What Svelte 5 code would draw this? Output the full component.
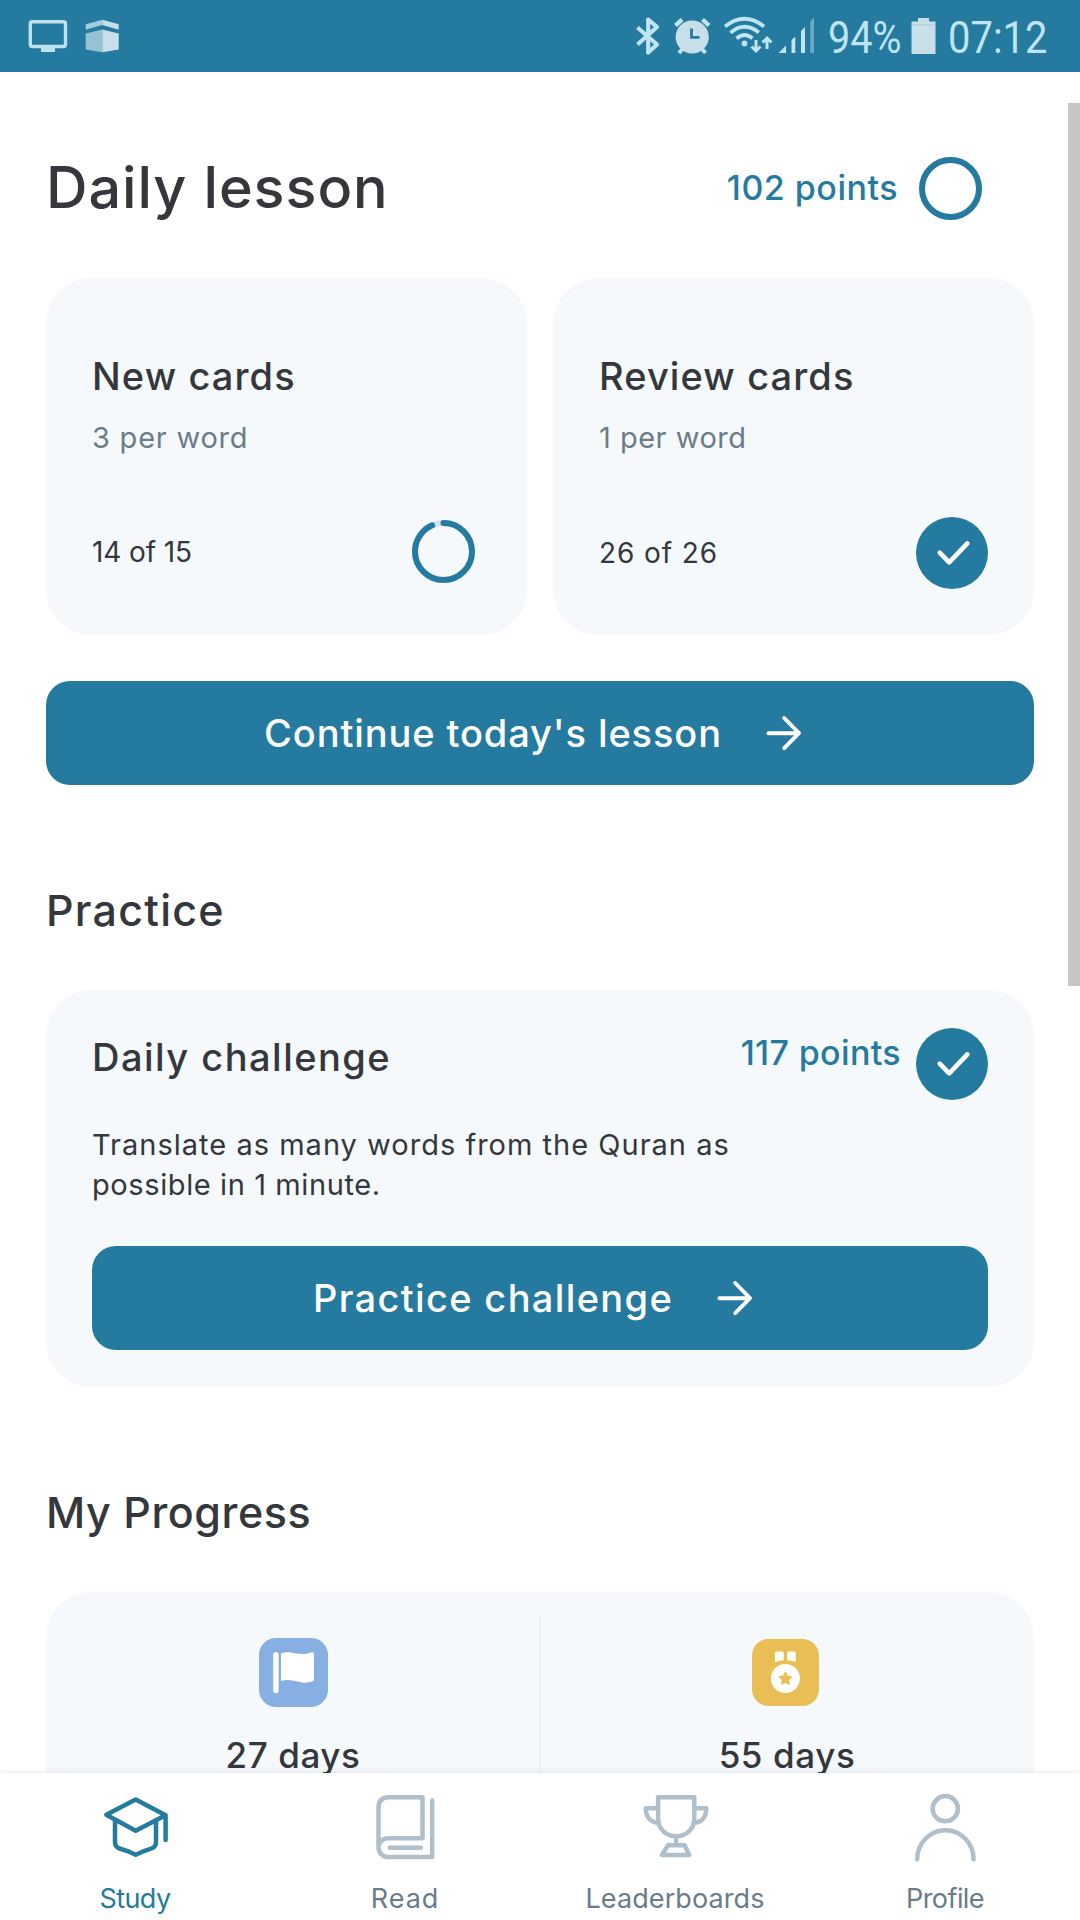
<script>
  const lessonCards = [
    { title: 'New cards', sub: '3 per word', count: '14 of 15', progress: 14 / 15, kind: 'new' },
    { title: 'Review cards', sub: '1 per word', count: '26 of 26', progress: 1, kind: 'review' }
  ];
  const circumference = 2 * Math.PI * 28.5;
  const tabs = ['Study', 'Read', 'Leaderboards', 'Profile'];
</script>

{#snippet ring(progress)}
  <svg class="ring" viewBox="0 0 63 63" fill="none" stroke-width="6">
    <circle cx="31.5" cy="31.5" r="28.5" stroke="#cfe3ef" />
    {#if progress >= 1}
      <circle cx="31.5" cy="31.5" r="28.5" stroke="#247a9f" />
    {:else}
      <circle
        cx="31.5" cy="31.5" r="28.5" stroke="#247a9f" stroke-linecap="round"
        stroke-dasharray="{circumference * progress} {circumference}"
        transform="rotate(-90 31.5 31.5)"
      />
    {/if}
  </svg>
{/snippet}

{#snippet check()}
  <svg class="check" viewBox="0 0 72 72" fill="none">
    <circle cx="36" cy="36" r="36" fill="#247a9f" />
    <path d="M23.7 35.7 33.2 45.3 51.3 26.4" stroke="#fff" stroke-width="4.6" stroke-linecap="round" stroke-linejoin="round" />
  </svg>
{/snippet}

{#snippet arrow()}
  <svg class="arrow" viewBox="0 0 65 44" fill="none" stroke="#fff" stroke-width="3.9" stroke-linecap="round" stroke-linejoin="round">
    <path d="M17.4 22.2H47.5M33.2 7 48 22.2 33.2 37.2" />
  </svg>
{/snippet}

<div class="screen">
  <div class="statusbar">
    <svg class="notif" viewBox="0 0 130 72">
      <rect x="30.3" y="21.7" width="35.2" height="24.8" rx="2" fill="none" stroke="#bfe1ee" stroke-width="3.4" />
      <path d="M41 47h14v5H41z" fill="#bfe1ee" />
      <path d="M85.7 24.2 102.3 19.7V25L85.7 29.8z" fill="#a3cbdb" />
      <path d="M102.3 19.7 118.7 24.2V29.8L102.3 25z" fill="#c6e0ea" />
      <path d="M85.7 33.6 102.3 29.4V52.2L85.7 49.4z" fill="#96c2d3" />
      <path d="M102.3 29.4 118.7 33.6V49.4L102.3 52.2z" fill="#c9dfe8" />
    </svg>
    <svg class="signals" viewBox="630 0 198 72" fill="none" stroke="#bfe4f2">
      <path d="M637.5 27.5 657 44.5 648.2 52.5V19.5L657 27 637.5 44.5" stroke-width="4.2" stroke-linejoin="round" />
      <g stroke-width="4.4">
        <path d="M675.5 25.5 682 19.5M709 25.5 702.5 19.5" />
        <path d="M679 53 682.5 49M705.5 53 702 49" stroke-width="4" />
      </g>
      <circle cx="692.2" cy="37" r="16.6" fill="#c6dfe8" stroke="none" />
      <path d="M691.5 28.5V37.3H699.5" stroke="#247a9f" stroke-width="2.8" />
      <g stroke-width="3.8">
        <path d="M725 26.5Q744.5 11 764 26.5" />
        <path d="M730.5 32.8Q744.5 21 758.8 32.5" />
        <path d="M736.5 38.5Q744.5 31.5 752.5 38.2" />
      </g>
      <circle cx="744.5" cy="43.5" r="2.9" fill="#bfe4f2" stroke="none" />
      <path d="M756 40V50.5M751.5 46.5 756 51 760.5 46.5M767 49V38.5M762.5 42.5 767 38 771.5 42.5" stroke-width="3" />
      <g stroke="none" fill="#bfe4f2">
        <path d="M778.5 53 786 45.5V53z" />
        <path d="M791.5 40 795.3 36.5V53H791.5z" />
        <path d="M801 31 805 27V53H801z" />
        <path d="M810.3 21 814 17.5V53H810.3z" opacity=".45" />
      </g>
    </svg>
    <span class="pct"><span>94%</span></span>
    <svg class="battery" viewBox="0 0 25 72">
      <path d="M7 18H18V21.5H24.5V54H.5V21.5H7z" fill="#c6dfe8" />
      <path d="M.5 24.8H24.5" stroke="#a5cfdf" stroke-width="1" />
    </svg>
    <span class="clock"><span>07:12</span></span>
  </div>

  <main class="content">
    <header class="head">
      <h1>Daily lesson</h1>
      <span class="points lesson-points">102 points</span>
      {@render ring(1)}
    </header>

    <section class="cards">
      {#each lessonCards as card}
        <article class="card {card.kind}">
          <h3>{card.title}</h3>
          <p class="sub">{card.sub}</p>
          <div class="count-row">
            <span class="count">{card.count}</span>
            {#if card.progress < 1}{@render ring(card.progress)}{:else}{@render check()}{/if}
          </div>
        </article>
      {/each}
    </section>

    <button class="cta continue"><span>Continue today's lesson</span>{@render arrow()}</button>

    <h2 class="h-practice">Practice</h2>
    <section class="panel challenge">
      <div class="challenge-head">
        <h3>Daily challenge</h3>
        <span class="points">117 points</span>
        {@render check()}
      </div>
      <p class="desc">
        <span class="line1">Translate as many words from the Quran as</span>
        <span class="line2">possible in 1 minute.</span>
      </p>
      <button class="cta practice"><span>Practice challenge</span>{@render arrow()}</button>
    </section>

    <h2 class="h-progress">My Progress</h2>
    <section class="panel progress">
      <div class="stat">
        <svg class="flag" viewBox="0 0 69 69">
          <rect width="69" height="69" rx="17" fill="#88afe2" />
          <rect x="14.2" y="14" width="5.4" height="41.3" rx="2.7" fill="#fff" />
          <path d="M22 15.3C33 11.5 40 19.5 52.5 14.3Q55 13.8 55 16V41.2Q55 42.6 53.5 43.2C41 48 35 39 22 43z" fill="#fff" />
        </svg>
        <strong>27 days</strong>
      </div>
      <div class="divider"></div>
      <div class="stat">
        <svg class="medal" viewBox="0 0 67 67">
          <rect width="67" height="67" rx="16.5" fill="#e9bf55" />
          <path d="M24.2 12.5H30.2Q31.7 12.5 31.7 14V21.2Q27 21.3 22.9 23.2V14Q22.9 12.5 24.2 12.5zM36.5 12.5H42.5Q43.7 12.5 43.7 14V23.2Q40 21.3 35.2 21.2V14Q35.2 12.5 36.5 12.5z" fill="#fff" />
          <circle cx="33.4" cy="39.4" r="14.5" fill="#fff" />
          <path d="M33.4 33.6 35.3 37.3 39.3 37.9 36.4 40.8 37 45 33.4 43.1 29.8 45 30.4 40.8 27.5 37.9 31.5 37.3z" fill="#e9bf55" stroke="#e9bf55" stroke-width="1.5" stroke-linejoin="round" />
        </svg>
        <strong>55 days</strong>
      </div>
    </section>
  </main>

  <div class="scrollthumb"></div>

  <nav class="tabs">
    {#each tabs as tab, i}
      <a class="tab {tab.toLowerCase()}" class:active={i === 0} href="#{tab.toLowerCase()}">
        <svg viewBox="0 0 72 72" fill="none" stroke="currentColor" stroke-width="4.5" stroke-linecap="round" stroke-linejoin="round">
          {#if tab === 'Study'}
            <path d="M36.7 8.5 7.3 23.7 36.7 39.7 66.6 24.3zM66.6 24.3V49M16 29V51Q16 56 20.5 57.5L30 60.7 36.7 63.8 43.5 60.7 52.5 57.5Q57 56 57 51V29" />
          {:else if tab === 'Read'}
            <path d="M9.5 56V17Q9.5 6.3 20 6.3H53.5V47.3H19.5A9.5 9.3 0 0 0 9.5 56.6 9.5 9.3 0 0 0 19.5 66H63.2V9.5M20.8 56.7H51.8" />
          {:else if tab === 'Leaderboards'}
            <path d="M19.1 6.3H55.3V28C55.3 38 47 45.3 37.2 45.3S19.1 38 19.1 28zM19.1 17.3H6.8C6.8 26 11.5 31.5 20 32M55.3 17.3H67.3C67.3 26 63 31.5 54.4 32M37.2 45.3V54.3M29 54.3H45.5L50.3 64H23z" />
          {:else}
            <circle cx="36.3" cy="17.7" r="12.6" />
            <path d="M8.2 68.2A28.2 28.9 0 0 1 64.6 68.2" />
          {/if}
        </svg>
        <span>{tab}</span>
      </a>
    {/each}
  </nav>
</div>

<style>
  :global(body) {
    background: #fff;
    overflow: hidden;
  }
  .screen {
    position: relative;
    width: 1080px;
    height: 1920px;
    display: flex;
    flex-direction: column;
    overflow: hidden;
    background: #fff;
    color: #34373b;
    font-family: Inter, sans-serif;
  }
  svg {
    display: block;
    flex: none;
  }
  h1, h2, h3, p {
    margin: 0;
    font-weight: 500;
    white-space: nowrap;
  }

  /* Status bar */
  .statusbar {
    flex: none;
    display: flex;
    height: 72px;
    background: #247a9f;
    color: #bfe4f2;
    font-family: Roboto, sans-serif;
    font-size: 45px;
  }
  .notif { width: 130px; height: 72px; }
  .signals { width: 198px; height: 72px; margin-left: 500px; }
  .pct, .clock { line-height: 75px; flex: none; }
  .pct { width: 83px; }
  .clock { width: 100px; margin-left: 12px; }
  .pct span, .clock span {
    display: inline-block;
    transform: scaleX(0.88);
    transform-origin: left;
  }
  .clock span { transform: scaleX(0.888); }
  .battery { width: 25px; height: 72px; }

  /* Scrolling content */
  .content {
    flex: 1;
    min-height: 0;
    overflow: hidden;
    padding: 25px 46px 0;
  }
  .head {
    display: flex;
    align-items: center;
    height: 181px;
    padding-right: 52px;
  }
  h1 {
    flex: 1;
    padding-bottom: 2px;
    font-size: 57.5px;
    letter-spacing: 0.93px;
  }
  .points {
    color: #247a9f;
    font-size: 34px;
    font-weight: 500;
    letter-spacing: 0.35px;
    white-space: nowrap;
  }
  .lesson-points {
    margin-right: 21px;
    letter-spacing: 0.5px;
  }
  .ring { width: 63px; height: 63px; }
  .head .ring { margin-top: 2px; }
  .check { width: 72px; height: 72px; }

  .cards {
    display: grid;
    grid-template-columns: 1fr 1fr;
    gap: 26px;
  }
  .card {
    height: 357px;
    padding: 72px 46px 0;
    box-sizing: border-box;
    border-radius: 46px;
    background: #f5f9fc;
  }
  h3 {
    font-size: 38px;
    line-height: 52px;
    letter-spacing: 1.1px;
  }
  .sub {
    margin-top: 17px;
    font-size: 29px;
    font-weight: 400;
    line-height: 37px;
    letter-spacing: 0.77px;
    color: #6b7c89;
  }
  .review .sub { letter-spacing: 0.5px; }
  .count-row {
    display: flex;
    align-items: center;
    justify-content: space-between;
    height: 72px;
    margin-top: 61px;
  }
  .new .count-row { height: 69px; padding-right: 6px; }
  .count { font-size: 28px; letter-spacing: -0.1px; }
  .review .count { letter-spacing: 0.9px; }

  .cta {
    display: flex;
    align-items: center;
    justify-content: center;
    gap: 29px;
    width: 100%;
    height: 104px;
    padding: 0;
    border: 0;
    border-radius: 24px;
    background: #247a9f;
    color: #fff;
    font: 500 38px Inter, sans-serif;
    letter-spacing: 0.9px;
  }
  .continue { margin-top: 46px; }
  .practice { margin-top: 41px; letter-spacing: 1.35px; }
  .arrow { width: 65px; height: 44px; }

  h2 {
    height: 205px;
    padding-top: 45px;
    box-sizing: border-box;
    font-size: 43px;
    line-height: 160px;
    letter-spacing: 1.25px;
  }
  .h-progress { letter-spacing: 0.54px; }

  .panel {
    border-radius: 46px;
    background: #f5f9fc;
    box-sizing: border-box;
  }
  .challenge {
    height: 397px;
    padding: 38px 46px 0;
  }
  .challenge-head {
    display: flex;
    align-items: flex-start;
    height: 72px;
  }
  .challenge-head h3 {
    flex: 1;
    padding-top: 3px;
    letter-spacing: 1.48px;
  }
  .challenge-head .points {
    line-height: 49px;
    margin-right: 15px;
  }
  .desc {
    margin-top: 25px;
    font-size: 29px;
    font-weight: 400;
    line-height: 40px;
  }
  .desc span { display: block; }
  .line1 { letter-spacing: 1.01px; }
  .line2 { letter-spacing: 0.6px; }

  .progress {
    display: flex;
    height: 330px;
  }
  .stat {
    flex: 1;
    display: flex;
    flex-direction: column;
    align-items: center;
    padding-top: 46px;
  }
  .divider {
    width: 2px;
    margin: 24px -1px;
    background: #eff3f6;
  }
  .flag { width: 69px; height: 69px; }
  .medal { width: 67px; height: 67px; margin: 1px 3px 1px 0; }
  .stat strong {
    margin-top: 24px;
    font-size: 35px;
    font-weight: 500;
    line-height: 48px;
    letter-spacing: 0.6px;
  }

  .scrollthumb {
    position: absolute;
    top: 103px;
    right: 0;
    width: 12px;
    height: 883px;
    background: #c6c6c6;
  }

  /* Bottom tabs */
  .tabs {
    position: relative;
    flex: none;
    display: grid;
    grid-template-columns: repeat(4, 1fr);
    height: 147px;
    background: #fff;
    box-shadow: 0 -1px 5px rgba(40, 50, 70, 0.1);
  }
  .tab {
    display: flex;
    flex-direction: column;
    align-items: center;
    padding-top: 18px;
    color: #b0bfcc;
    font-size: 27px;
    text-decoration: none;
  }
  .tab svg { width: 72px; height: 72px; }
  .tab span {
    margin-top: 18px;
    line-height: 36px;
    color: #6b7c89;
    letter-spacing: 0.1px;
  }
  .tab.active, .tab.active span { color: #247a9f; }
  .study span, .profile span { letter-spacing: -0.55px; }
  .read span { letter-spacing: 0.95px; }
</style>
